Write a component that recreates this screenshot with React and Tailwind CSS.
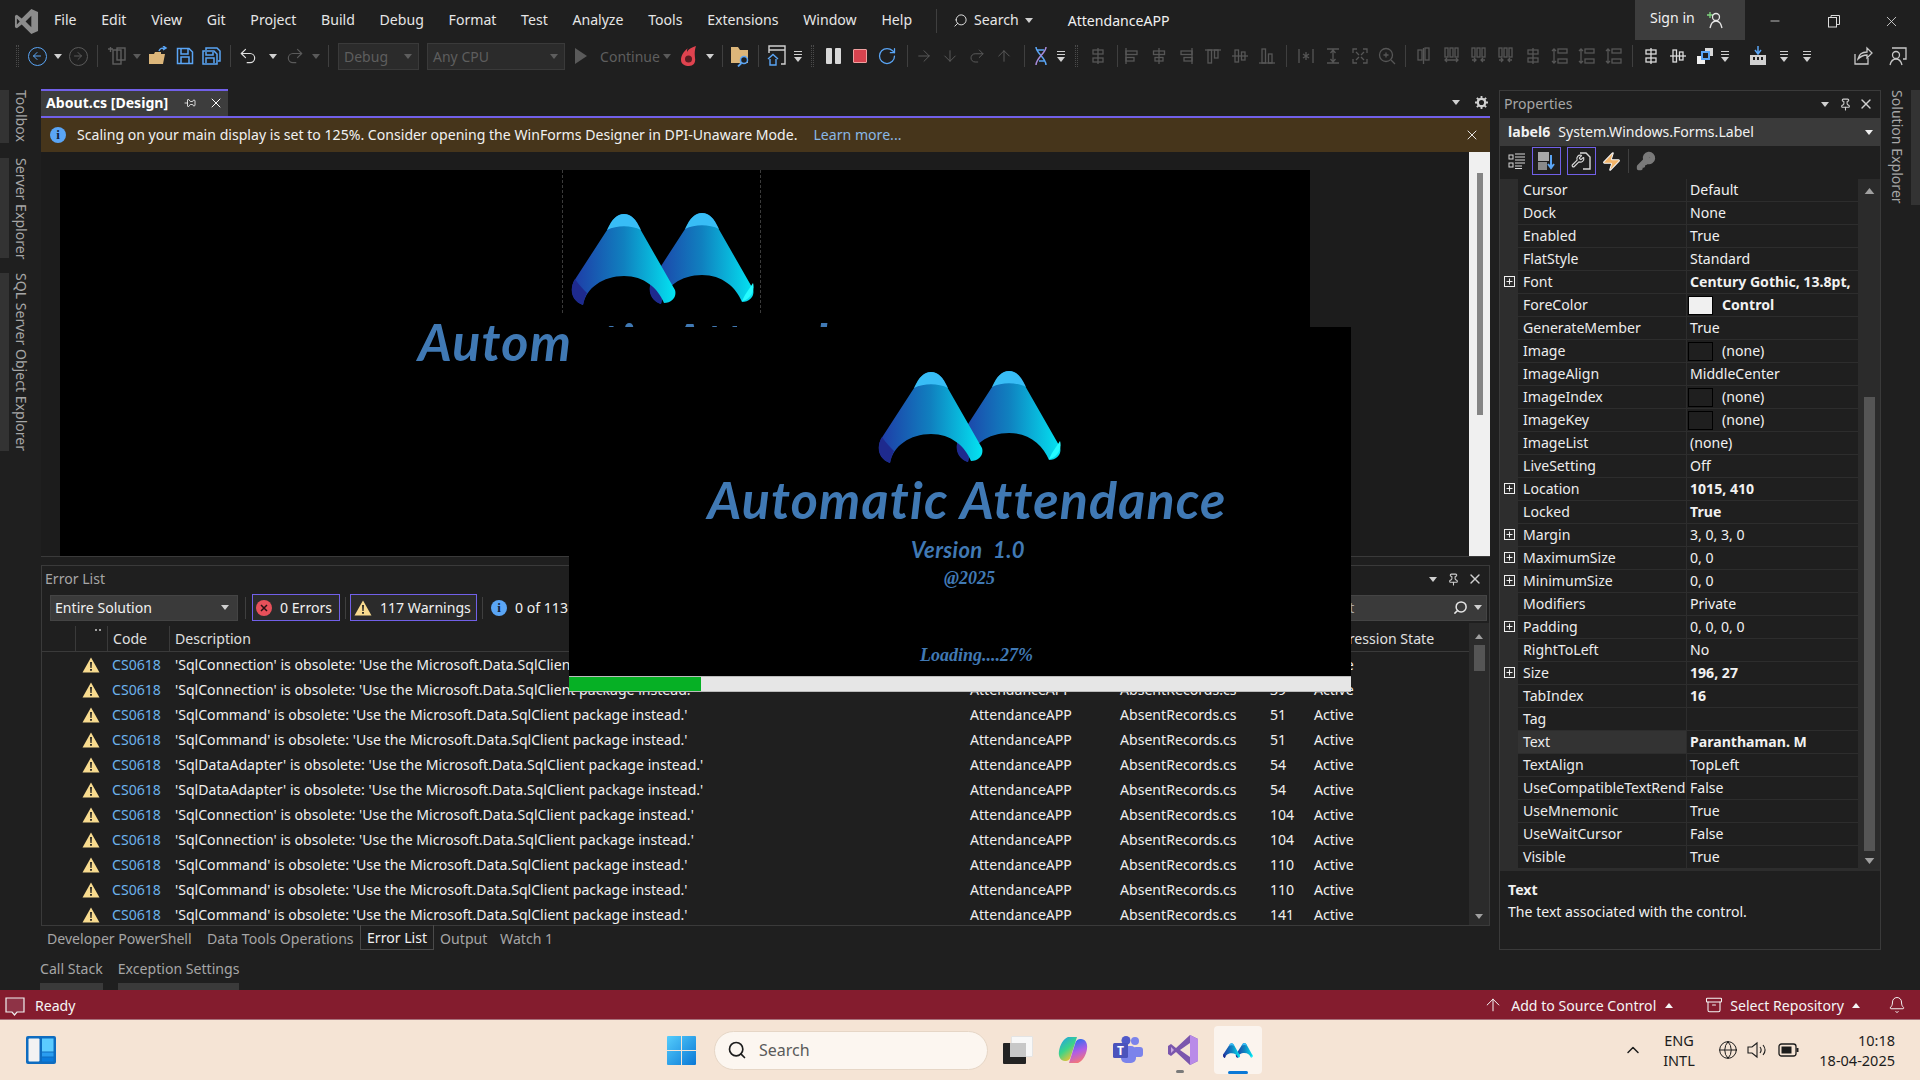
import {
  Pin, X, Minus, Search, Bell, ChevronUp, Globe, Archive, ArrowUp, ArrowRight, ArrowDown,
  Undo2, Redo2, RotateCw, Wrench, KeyRound, Zap,
} from "lucide-react";

const MENU = ["File", "Edit", "View", "Git", "Project", "Build", "Debug", "Format", "Test", "Analyze", "Tools", "Extensions", "Window", "Help"];

const OBSOLETE = (n) => `'${n}' is obsolete: 'Use the Microsoft.Data.SqlClient package instead.'`;
const ERRORS = [
  ["SqlConnection", 39], ["SqlConnection", 39], ["SqlCommand", 51], ["SqlCommand", 51],
  ["SqlDataAdapter", 54], ["SqlDataAdapter", 54], ["SqlConnection", 104], ["SqlConnection", 104],
  ["SqlCommand", 110], ["SqlCommand", 110], ["SqlCommand", 141],
];

const PROPS = [
  { n: "Cursor", v: "Default" },
  { n: "Dock", v: "None" },
  { n: "Enabled", v: "True" },
  { n: "FlatStyle", v: "Standard" },
  { n: "Font", v: "Century Gothic, 13.8pt,", b: true, plus: true },
  { n: "ForeColor", v: "Control", b: true, swatch: "light" },
  { n: "GenerateMember", v: "True" },
  { n: "Image", v: "(none)", swatch: "dark" },
  { n: "ImageAlign", v: "MiddleCenter" },
  { n: "ImageIndex", v: "(none)", swatch: "dark" },
  { n: "ImageKey", v: "(none)", swatch: "dark" },
  { n: "ImageList", v: "(none)" },
  { n: "LiveSetting", v: "Off" },
  { n: "Location", v: "1015, 410", b: true, plus: true },
  { n: "Locked", v: "True", b: true },
  { n: "Margin", v: "3, 0, 3, 0", plus: true },
  { n: "MaximumSize", v: "0, 0", plus: true },
  { n: "MinimumSize", v: "0, 0", plus: true },
  { n: "Modifiers", v: "Private" },
  { n: "Padding", v: "0, 0, 0, 0", plus: true },
  { n: "RightToLeft", v: "No" },
  { n: "Size", v: "196, 27", b: true, plus: true },
  { n: "TabIndex", v: "16", b: true },
  { n: "Tag", v: "" },
  { n: "Text", v: "Paranthaman. M", b: true, sel: true },
  { n: "TextAlign", v: "TopLeft" },
  { n: "UseCompatibleTextRend", v: "False" },
  { n: "UseMnemonic", v: "True" },
  { n: "UseWaitCursor", v: "False" },
  { n: "Visible", v: "True" },
];

function Logo({ className }) {
  return (
    <svg viewBox="0 0 184 92" className={className}>
      <defs>
        <linearGradient id="lg-a" x1="0" x2="1" y1="0" y2="0">
          <stop offset="0" stopColor="#1f3aa6" />
          <stop offset="0.5" stopColor="#1080bf" />
          <stop offset="1" stopColor="#03e4f2" />
        </linearGradient>
      </defs>
      {[78, 0].map((dx) => (
        <g key={dx} transform={`translate(${dx} ${dx ? -1 : 0})`}>
          <path d="M53 1C46 1 42 6 38 14L3 68C-1 76 0 87 12 92C15 75 32 63 53 63C73 63 87 75 93 90C101 90 106 84 104 77L68 14C64 6 60 1 53 1Z" fill="url(#lg-a)" />
          <path d="M36 17C41 6 46 1 53 1C60 1 65 6 70 17C60 12 46 12 36 17Z" fill="#38bdf6" />
          <path d="M4 66C-2 76 0 88 12 92C13 88 14 84 16 80C12 76 8 72 4 66Z" fill="#1e2a8e" />
        </g>
      ))}
      <path d="M171 88C176 88 185 80 182 70L174 82Z" fill="#25fbff" />
    </svg>
  );
}

function Caret({ className = "text-[#d0d0d0]", up }) {
  return (
    <svg viewBox="0 0 8 5" className={`w-[8px] h-[5px] ${className}`}>
      <path d={up ? "M0 5L4 0L8 5Z" : "M0 0H8L4 5Z"} fill="currentColor" />
    </svg>
  );
}

function Grip() {
  return <div className="w-[3px] h-[22px] border-x border-dotted border-[#4a4a4a]" />;
}

function Sep() {
  return <div className="w-px h-[22px] bg-[#3f3f3f]" />;
}

function Warn({ className = "w-[18px] h-[16px]" }) {
  return (
    <svg viewBox="0 0 18 16" className={className}>
      <path d="M9 0.5L17.5 15.5H0.5Z" fill="#f8db8f" />
      <path d="M8.1 5H9.9L9.6 11H8.4Z M8.1 12H9.9V13.8H8.1Z" fill="#1a1a1a" />
    </svg>
  );
}

function InfoDot({ className }) {
  return (
    <div className={`rounded-full bg-[#5aa5f5] text-[#10223a] flex items-center justify-center font-bold font-['Liberation_Serif',serif] ${className}`}>i</div>
  );
}

// generic designer layout glyph, the toolbar has a lot of these
function Layout({ v = 0, on }) {
  const c = on ? "#dcdcdc" : "#565656";
  const shapes = [
    <><path d="M3 1V17" /><rect x="3" y="4" width="11" height="3.5" /><rect x="3" y="10.5" width="8" height="3.5" /></>,
    <><path d="M9 1V17" /><rect x="3.5" y="4" width="11" height="3.5" /><rect x="5" y="10.5" width="8" height="3.5" /></>,
    <><path d="M15 1V17" /><rect x="4" y="4" width="11" height="3.5" /><rect x="7" y="10.5" width="8" height="3.5" /></>,
    <><path d="M1 3H17" /><rect x="4" y="3" width="3.5" height="13" /><rect x="10.5" y="3" width="3.5" height="8" /></>,
    <><path d="M1 9H17" /><rect x="4" y="3" width="3.5" height="12" /><rect x="10.5" y="5" width="3.5" height="8" /></>,
    <><path d="M1 16H17" /><rect x="4" y="2" width="3.5" height="14" /><rect x="10.5" y="7" width="3.5" height="9" /></>,
    <><path d="M2 2V16M16 2V16" /><path d="M9 5V13M6 7L12 11M12 7L6 11" /></>,
    <><path d="M3 2H15M3 16H15M9 3V15M6.5 6L9 3L11.5 6M6.5 12L9 15L11.5 12" /></>,
    <><path d="M2 6V2H6M12 2H16V6M16 12V16H12M6 16H2V12" /><path d="M5 5L8 8M13 5L10 8M5 13L8 10M13 13L10 10" /></>,
    <><circle cx="8" cy="8" r="6.5" /><path d="M13 13L17 17M5.5 8H10.5M8 5.5V10.5" /></>,
    <><rect x="2" y="3" width="4" height="10" /><rect x="9" y="1" width="4" height="12" /><path d="M7.5 1V17" /></>,
    <><rect x="2" y="1" width="3" height="9" /><rect x="7" y="1" width="3" height="9" /><rect x="12" y="1" width="3" height="9" /><path d="M2 13H15M4 15L2 13L4 11M13 15L15 13L13 11" /></>,
    <><rect x="2" y="1" width="3" height="9" /><rect x="7" y="1" width="3" height="9" /><rect x="12" y="1" width="3" height="9" /><path d="M6 13H2M11 13H15M4 11L6 13L4 15M13 11L11 13L13 15" /></>,
    <><rect x="4" y="3" width="10" height="4" /><rect x="4" y="11" width="10" height="4" /><path d="M9 1V17" /></>,
    <><rect x="7" y="2" width="9" height="4" /><rect x="7" y="12" width="9" height="4" /><path d="M3 2V16M1 4L3 2L5 4M1 14L3 16L5 14" /></>,
  ];
  return (
    <svg viewBox="0 0 18 18" fill="none" stroke={c} strokeWidth="1.3" className="w-[18px] h-[18px]">
      {shapes[v]}
    </svg>
  );
}

function Cell({ c, children }) {
  return <div className={`flex items-center justify-center shrink-0 h-full ${c}`}>{children}</div>;
}

function Combo({ label, c }) {
  return (
    <div className={`h-[27px] shrink-0 bg-[#2b2b2b] border border-[#3a3a3a] flex items-center justify-between pl-[5px] pr-[6px] text-[#5e5e5e] ${c}`}>
      {label}
      <Caret className="text-[#5e5e5e]" />
    </div>
  );
}

function TitleBar() {
  return (
    <div className="h-[42px] flex shrink-0 relative">
      <div className="w-[54px] flex items-center justify-center">
        <svg viewBox="0 0 26 28" className="w-[25px] h-[27px] ml-[-1px]">
          <path d="M18 1L25 4V24L18 27L8 17L3 21L1 20V8L3 7L8 11ZM18 8L12 14L18 20Z M3 11V17L6 14Z" fill="#8c8c8c" fillRule="evenodd" />
        </svg>
      </div>
      <div className="flex items-center gap-[24.7px] pb-[2px] text-[#e6e6e6]">
        {MENU.map((m) => <span key={m}>{m}</span>)}
      </div>
      <div className="w-px h-[24px] bg-[#3f3f3f] self-center ml-[24px]" />
      <div className="flex items-center ml-[16px] gap-[6px] pb-[2px] text-[#e6e6e6]">
        <Search size={15} strokeWidth={1.5} className="-scale-x-100" />
        <span>Search</span>
        <Caret />
      </div>
      <span className="self-center ml-[35px] pb-[1px] text-[#f1f1f1]">AttendanceAPP</span>
      <div className="ml-auto flex">
        <div className="h-[40px] w-[110px] bg-[#3d3d3d] flex items-center pl-[15px] gap-[10px] text-[#f1f1f1]">
          <span className="-mt-[5px]">Sign in</span>
          <svg viewBox="0 0 20 20" fill="none" strokeWidth="1.3" className="w-[20px] h-[20px] -mt-[2px]">
            <path d="M2 6H8M5 3V9" stroke="#7fd67f" />
            <circle cx="11" cy="8" r="3.5" stroke="#e6e6e6" />
            <path d="M5 19C6 14 8 12 11 12C14 12 16 14 17 19" stroke="#e6e6e6" />
          </svg>
        </div>
        <div className="w-[175px] flex items-center text-[#dcdcdc]">
          <Cell c="w-[60px]"><Minus size={14} strokeWidth={1.4} /></Cell>
          <Cell c="w-[57px]">
            <svg viewBox="0 0 14 14" fill="none" stroke="currentColor" className="w-[14px] h-[14px]"><rect x="1.5" y="3.5" width="8" height="9.5" /><path d="M4 3.5V1.5H12.5V10.5H9.5" /></svg>
          </Cell>
          <Cell c="w-[58px]"><X size={17} strokeWidth={1.2} /></Cell>
        </div>
      </div>
    </div>
  );
}

function ToolBar() {
  const dim = "text-[#5a5a5a]";
  const caret = <Caret />;
  const dimCaret = <Caret className="text-[#5a5a5a]" />;
  const stackDrop = (
    <div className="flex flex-col items-center gap-[2px]">
      <div className="w-[8px] h-px bg-[#cfcfcf]" />
      <div className="w-[8px] h-px bg-[#cfcfcf]" />
      <Caret />
    </div>
  );
  return (
    <div className="h-[28px] mb-[18px] flex shrink-0 pl-[12px] text-[14px]">
      <Cell c="w-[10px]"><Grip /></Cell>
      <Cell c="w-[30px]">
        <div className="w-[19px] h-[19px] rounded-full border-[1.5px] border-[#5aa5f5] flex items-center justify-center text-[#5aa5f5]"><ArrowRight size={12} className="rotate-180" /></div>
      </Cell>
      <Cell c="w-[12px]">{caret}</Cell>
      <Cell c="w-[28px]">
        <div className={`w-[19px] h-[19px] rounded-full border border-[#5a5a5a] flex items-center justify-center ${dim}`}><ArrowRight size={12} /></div>
      </Cell>
      <Cell c="w-[10px]"><Sep /></Cell>
      <Cell c="w-[30px]">
        <svg viewBox="0 0 20 20" fill="none" stroke="#5e5e5e" strokeWidth="1.4" className="w-[20px] h-[20px]"><rect x="6" y="4" width="8" height="14" /><rect x="10" y="2" width="8" height="12" /><path d="M1 3H6M3.5 1V6" /></svg>
      </Cell>
      <Cell c="w-[10px]">{dimCaret}</Cell>
      <Cell c="w-[32px]">
        <svg viewBox="0 0 20 20" className="w-[20px] h-[20px]"><path d="M1 8H6L7 6H13V8H17L15 18H1Z" fill="#dcb67a" /><path d="M11 5C12 2 14 2 17 2M15 0L18 2L15 4" fill="none" stroke="#5aa5f5" strokeWidth="1.5" /></svg>
      </Cell>
      <Cell c="w-[22px]">
        <svg viewBox="0 0 18 18" fill="none" stroke="#5aa5f5" strokeWidth="1.5" className="w-[18px] h-[18px]"><path d="M1.5 1.5H13L16.5 5V16.5H1.5Z" /><path d="M5 2V7H12V2M5 16V10H13V16" /></svg>
      </Cell>
      <Cell c="w-[30px]">
        <svg viewBox="0 0 19 18" fill="none" stroke="#5aa5f5" strokeWidth="1.5" className="w-[19px] h-[18px]"><path d="M4 3V1H15L18 4V14H16" /><path d="M1 4H12L15 7V17H1Z" /><path d="M4 5V8H11V5M4 16V11H12V16" /></svg>
      </Cell>
      <Cell c="w-[8px]"><Sep /></Cell>
      <Cell c="w-[28px]"><Undo2 size={20} strokeWidth={1.4} className="text-[#e0e0e0]" /></Cell>
      <Cell c="w-[22px]">{caret}</Cell>
      <Cell c="w-[22px]"><Redo2 size={20} strokeWidth={1.4} className={dim} /></Cell>
      <Cell c="w-[20px]">{dimCaret}</Cell>
      <Cell c="w-[4px]"><Sep /></Cell>
      <div className="w-[8px] shrink-0" />
      <Cell c="w-[81px]"><Combo label="Debug" c="w-full" /></Cell>
      <div className="w-[8px] shrink-0" />
      <Cell c="w-[138px]"><Combo label="Any CPU" c="w-full" /></Cell>
      <Cell c="w-[32px]"><svg viewBox="0 0 12 16" className="w-[12px] h-[16px]"><path d="M0 0L12 8L0 16Z" fill="#5a5a5a" /></svg></Cell>
      <Cell c="w-[66px]"><span className="text-[#5e5e5e]">Continue</span></Cell>
      <Cell c="w-[8px]">{dimCaret}</Cell>
      <Cell c="w-[35px]">
        <svg viewBox="0 0 18 22" className="w-[18px] h-[22px]"><path d="M16 1C10 3 8 5 7 7C7 5 7 4 8 3C3 7 1 11 1 15C1 19 5 21 9 21C13 21 16 18 15 13C15 10 14 7 16 1Z" fill="#e0434f" /><circle cx="8.5" cy="14" r="3.5" fill="#5a1d22" /></svg>
      </Cell>
      <Cell c="w-[8px]">{caret}</Cell>
      <Cell c="w-[16px]"><Sep /></Cell>
      <Cell c="w-[20px]">
        <svg viewBox="0 0 20 22" className="w-[20px] h-[22px]"><path d="M1 2H8L10 5H18V18H1Z" fill="#dcb67a" /><circle cx="14" cy="15" r="3.5" fill="#1f1f1f" stroke="#5aa5f5" strokeWidth="1.5" /><path d="M11.5 18L8 21.5" stroke="#5aa5f5" strokeWidth="1.8" /></svg>
      </Cell>
      <Cell c="w-[16px]"><Sep /></Cell>
      <Cell c="w-[22px]">
        <svg viewBox="0 0 20 22" fill="none" strokeWidth="1.4" className="w-[20px] h-[22px]"><path d="M2 8V1H18V19H14M2 5H18" stroke="#d0d0d0" /><path d="M1 14L6 9.5L11 14M3 14V20H9V14" stroke="#5aa5f5" /></svg>
      </Cell>
      <Cell c="w-[20px]">{stackDrop}</Cell>
      <Cell c="w-[8px]"><Grip /></Cell>
      <Cell c="w-[34px]"><div className="flex gap-[3px]"><div className="w-[6px] h-[16px] bg-[#d8d8d8] rounded-[1px]" /><div className="w-[6px] h-[16px] bg-[#d8d8d8] rounded-[1px]" /></div></Cell>
      <Cell c="w-[20px]"><div className="w-[14px] h-[14px] bg-[#d8434f] border border-[#f0a0a0] rounded-[1px]" /></Cell>
      <Cell c="w-[34px]"><RotateCw size={20} strokeWidth={1.5} className="text-[#5aa5f5]" /></Cell>
      <Cell c="w-[6px]"><Sep /></Cell>
      <Cell c="w-[28px]"><ArrowRight size={18} strokeWidth={1.3} className={dim} /></Cell>
      <Cell c="w-[24px]"><ArrowDown size={18} strokeWidth={1.3} className={dim} /></Cell>
      <Cell c="w-[30px]"><Redo2 size={18} strokeWidth={1.3} className={dim} /></Cell>
      <Cell c="w-[24px]"><ArrowUp size={18} strokeWidth={1.3} className={dim} /></Cell>
      <Cell c="w-[16px]"><Sep /></Cell>
      <Cell c="w-[18px]">
        <svg viewBox="0 0 18 20" fill="none" strokeWidth="1.5" className="w-[18px] h-[20px]"><path d="M4 1C4 7 14 12 14 19M5 4H12M7 15H13" stroke="#5aa5f5" /><path d="M14 1C14 7 4 12 4 19" stroke="#a78bda" /></svg>
      </Cell>
      <Cell c="w-[22px]">{stackDrop}</Cell>
      <Cell c="w-[8px]"><Grip /></Cell>
      <Cell c="w-[36px]"><Layout v={13} /></Cell>
      <Cell c="w-[2px]"><Sep /></Cell>
      {[0, 1, 2, 3, 4, 5].map((v) => <Cell key={v} c="w-[27px]"><Layout v={v} /></Cell>)}
      <Cell c="w-[12px]"><Sep /></Cell>
      {[6, 7, 8, 9].map((v) => <Cell key={v} c="w-[27px]"><Layout v={v} /></Cell>)}
      <Cell c="w-[10px]"><Sep /></Cell>
      <div className="w-px shrink-0" />
      {[10, 11, 12, 12, 13, 14, 14, 14].map((v, i) => <Cell key={i} c="w-[27px]"><Layout v={v} /></Cell>)}
      <Cell c="w-[10px]"><Sep /></Cell>
      <Cell c="w-[27px]"><Layout v={13} on /></Cell>
      <Cell c="w-[27px]"><Layout v={4} on /></Cell>
      <Cell c="w-[27px]">
        <svg viewBox="0 0 18 18" className="w-[18px] h-[18px]"><rect x="1" y="9" width="8" height="8" fill="#f0f0f0" /><rect x="9" y="1" width="8" height="8" fill="#d8d8d8" /><rect x="6" y="5" width="7" height="7" fill="#1f1f1f" stroke="#5aa5f5" strokeWidth="2" /></svg>
      </Cell>
      <Cell c="w-[14px]">{stackDrop}</Cell>
      <div className="w-[12px] shrink-0" />
      <Cell c="w-[28px]">
        <svg viewBox="0 0 18 20" className="w-[18px] h-[20px]"><path d="M9 0V7M6 4L9 8L12 4" fill="none" stroke="#5aa5f5" strokeWidth="1.5" /><path d="M1 9H17V19H1Z M4 11V14H6V11Z M8 11V14H10V11Z M12 11V14H14V11Z" fill="#d0d0d0" fillRule="evenodd" /></svg>
      </Cell>
      <Cell c="w-[24px]">{stackDrop}</Cell>
      <Cell c="w-[22px]">{stackDrop}</Cell>
      <div className="w-[30px] shrink-0" />
      <Cell c="w-[30px]">
        <svg viewBox="0 0 20 20" fill="none" stroke="#c8c8c8" strokeWidth="1.3" className="w-[20px] h-[20px]"><path d="M2 8V18H15V12" /><path d="M5 13C6 8 10 6 14 6V2L19 7L14 12V9C11 9 8 10 5 13Z" /></svg>
      </Cell>
      <Cell c="w-[38px]">
        <svg viewBox="0 0 20 20" fill="none" stroke="#c8c8c8" strokeWidth="1.3" className="w-[20px] h-[20px]"><path d="M5 2H19V13H16" /><circle cx="9" cy="9" r="3.5" /><path d="M3 19C4 15 6 13 9 13C12 13 14 15 15 19" /></svg>
      </Cell>
    </div>
  );
}

function RailLabel({ children, c }) {
  return (
    <div className={`flex shrink-0 ${c}`}>
      <div className="w-[9px] bg-[#333333] h-full" />
      <span className="ml-[5px] [writing-mode:vertical-rl] whitespace-nowrap text-[#a6a6a6] leading-[14px]">{children}</span>
    </div>
  );
}

function Designer() {
  return (
    <div className="h-[404px] shrink-0 relative bg-[#1c1c1c] flex justify-end">
      {/* the form is a free canvas, controls sit where the designer put them */}
      <div className="absolute left-[19px] top-[18px] w-[1250px] bottom-0 bg-black overflow-hidden">
        <div className="absolute left-[502px] top-0 w-[199px] h-[143px] border-x border-dashed border-[#3a3a3a]" />
        <Logo className="absolute left-[511px] top-[43px] w-[184px] h-[92px]" />
        <div className="absolute left-[358px] top-[146px] whitespace-nowrap font-['Lato',sans-serif] font-bold italic text-[52px] tracking-[1.2px] leading-[50px] text-[#4079b4]">Automatic Attendance</div>
      </div>
      <div className="w-[21px] bg-[#f0f0f0] pt-[21px] pl-[8px]">
        <div className="w-[6px] h-[242px] bg-[#858585]" />
      </div>
    </div>
  );
}

function PanelBtn({ icon, label, c }) {
  return (
    <div className={`h-[27px] shrink-0 border border-[#7160e8] bg-[#2b2b2b] flex items-center ${c}`}>
      {icon}
      {label}
    </div>
  );
}

const GRID = "grid grid-cols-[33px_32px_62px_796px_150px_150px_44px_151px]";

function ErrorList() {
  return (
    <div className="h-[361px] shrink-0 border border-[#3a3a3a] bg-[#1f1f1f] flex flex-col overflow-hidden">
      <div className="h-[26px] shrink-0 flex items-center pl-[3px] text-[#a6a6a6]">
        <span>Error List</span>
        <div className="ml-auto flex items-center text-[#cfcfcf]">
          <Caret />
          <Pin size={13} className="ml-[10px]" />
          <X size={16} className="ml-[7px] mr-[6px]" />
        </div>
      </div>
      <div className="h-[31px] shrink-0 flex items-center pl-[8px] text-[#f1f1f1]">
        <div className="w-[188px] h-[26px] bg-[#3a3a3a] border border-[#444444] flex items-center justify-between pl-[4px] pr-[8px]">
          Entire Solution
          <Caret />
        </div>
        <div className="w-px h-[22px] bg-[#3f3f3f] mx-[7px]" />
        <PanelBtn c="w-[88px] gap-[8px] pl-[3px] ml-[-1px]" label="0 Errors" icon={
          <svg viewBox="0 0 16 16" className="w-[16px] h-[16px]"><circle cx="8" cy="8" r="8" fill="#e8505a" /><path d="M5 5L11 11M11 5L5 11" stroke="#2a1113" strokeWidth="1.5" /></svg>
        } />
        <div className="w-px h-[22px] bg-[#3f3f3f] mx-[4.5px]" />
        <PanelBtn c="w-[127px] gap-[8px] pl-[3px]" label="117 Warnings" icon={<Warn />} />
        <div className="w-px h-[22px] bg-[#3f3f3f] ml-[5px]" />
        <InfoDot className="w-[16px] h-[16px] text-[13px] ml-[8px]" />
        <span className="ml-[8px]">0 of 113 Messages</span>
        <div className="ml-auto w-[280px] h-[26px] bg-[#3a3a3a] border border-[#444444] flex items-center pl-[38px] pr-[4px] mr-[2px] text-[#a6a6a6]">
          Search Error List
          <Search size={15} strokeWidth={2.4} className="ml-auto text-[#e6e6e6] -scale-x-100" />
          <Caret className="ml-[6px] text-[#d0d0d0]" />
        </div>
      </div>
      <div className="flex flex-1 min-h-0">
        <div className="flex-1 min-w-0">
          <div className={`${GRID} h-[29px] pt-[3px] border-b border-[#3a3a3a] items-stretch text-[#e0e0e0]`}>
            <div />
            <div className="border-l border-[#3a3a3a] relative"><div className="absolute right-[6px] top-[3px] w-[6px] h-[5px] border-t-2 border-dotted border-[#a0a0a0]" /></div>
            {["Code", "Description", "Project", "File", "Line", "Suppression State"].map((h) => (
              <div key={h} className="border-l border-[#3a3a3a] pl-[5px] flex items-center">{h}</div>
            ))}
          </div>
          {ERRORS.map(([n, line], i) => (
            <div key={i} className={`${GRID} h-[25px] items-center text-[#f0f0f0]`}>
              <div />
              <div className="flex justify-center"><Warn /></div>
              <div className="pl-[5px] text-[#6cb2ec]">CS0618</div>
              <div className="pl-[6px] whitespace-nowrap overflow-hidden">{OBSOLETE(n)}</div>
              <div className="pl-[5px]">AttendanceAPP</div>
              <div className="pl-[5px]">AbsentRecords.cs</div>
              <div className="pl-[5px]">{line}</div>
              <div className="pl-[5px]">Active</div>
            </div>
          ))}
        </div>
        <div className="w-[20px] shrink-0 bg-[#2b2b2b] flex flex-col items-center pt-[11px] pb-[6px]">
          <Caret up className="text-[#a0a0a0]" />
          <div className="w-[11px] h-[26px] bg-[#555555] mt-[6px]" />
          <Caret className="text-[#a0a0a0] mt-auto" />
        </div>
      </div>
    </div>
  );
}

function ToolTabs() {
  return (
    <>
      <div className="h-[30px] shrink-0 flex pl-[6px] text-[#a6a6a6] gap-[1px] items-start">
        <span className="h-[25px] flex items-center w-[159px]">Developer PowerShell</span>
        <span className="h-[25px] flex items-center w-[152px]">Data Tools Operations</span>
        <span className="h-[25px] px-[6px] pt-[1px] flex items-center border border-t-0 border-[#4a4a4a] text-[#f1f1f1] -mt-px">Error List</span>
        <span className="h-[25px] flex items-center ml-[5px] w-[59px]">Output</span>
        <span className="h-[25px] flex items-center">Watch 1</span>
      </div>
      <div className="h-[35px] shrink-0 flex -ml-px gap-[15px] text-[#a6a6a6]">
        <div className="flex flex-col justify-between">
          <span className="leading-[25px]">Call Stack</span>
          <div className="h-[8px] bg-[#3a3a3a]" />
        </div>
        <div className="flex flex-col justify-between">
          <span className="leading-[25px]">Exception Settings</span>
          <div className="h-[8px] bg-[#3a3a3a]" />
        </div>
      </div>
    </>
  );
}

function Properties() {
  const tools = "w-[28px] h-[27px] flex items-center justify-center";
  const on = "w-[29px] h-[28px] flex items-center justify-center border border-[#7160e8]";
  return (
    <div className="w-[382px] h-[860px] mt-[2px] ml-[9px] shrink-0 border border-[#3a3a3a] flex flex-col">
      <div className="h-[27px] shrink-0 flex items-center pl-[4px] pb-[1px] text-[#a6a6a6]">
        Properties
        <div className="ml-auto flex items-center text-[#cfcfcf]">
          <Caret />
          <Pin size={13} className="ml-[10px]" />
          <X size={16} className="ml-[6px] mr-[6px]" />
        </div>
      </div>
      <div className="h-[28px] shrink-0 bg-[#3a3a3a] flex items-center pl-[8px] pr-[7px] gap-[8px] text-[#f1f1f1]">
        <b className="font-bold">label6</b>
        <span>System.Windows.Forms.Label</span>
        <Caret className="ml-auto" />
      </div>
      <div className="h-[30px] shrink-0 flex items-center pl-[3px] gap-[1px]">
        <div className={tools}>
          <svg viewBox="0 0 18 18" fill="none" stroke="#d8d8d8" className="w-[18px] h-[18px]"><rect x="1" y="3" width="4" height="4" /><rect x="1" y="11" width="4" height="4" /><path d="M7 2H17M7 5H17M7 8H17M7 11H17M7 14H14M7 16.5H14" /></svg>
        </div>
        <div className={on}>
          <svg viewBox="0 0 20 20" className="w-[20px] h-[20px]"><rect x="1" y="1" width="11" height="9" fill="#a8a8a8" /><rect x="1" y="11" width="9" height="8" fill="#8a8a8a" /><path d="M14 4V16M11 13L14 17L17 13" fill="none" stroke="#5aa5f5" strokeWidth="2" /></svg>
        </div>
        <div className="w-[4px]" />
        <div className={on}>
          <svg viewBox="0 0 20 20" fill="none" stroke="#d8d8d8" strokeWidth="1.4" className="w-[20px] h-[20px]"><path d="M8 2H14L18 6V18H11" /></svg>
          <Wrench size={14} className="absolute mr-[8px] text-[#d8d8d8]" />
        </div>
        <div className={tools}><Zap size={21} fill="#f3b56a" stroke="#f5f5f5" strokeWidth={1.2} /></div>
        <div className="w-px h-[24px] bg-[#3f3f3f] mx-[2px]" />
        <div className={tools}><KeyRound size={20} fill="#7a7a7a" stroke="#7a7a7a" /></div>
      </div>
      <div className="flex mt-[3px]">
        <div className="flex-1 min-w-0 bg-[#2d2d2d]">
          {PROPS.map((p) => (
            <div key={p.n} className="h-[23px] flex">
              <div className="w-[18px] shrink-0 flex items-center justify-center">
                {p.plus && (
                  <svg viewBox="0 0 11 11" fill="none" stroke="#f0f0f0" className="w-[11px] h-[11px] mt-[-2px]"><rect x="0.5" y="0.5" width="10" height="10" /><path d="M2.5 5.5H8.5M5.5 2.5V8.5" /></svg>
                )}
              </div>
              <div className={`w-[168px] shrink-0 border-b border-[#2d2d2d] pl-[5px] flex items-center whitespace-nowrap overflow-hidden text-[#ededed] ${p.sel ? "bg-[#333333]" : "bg-[#1f1f1f]"}`}>{p.n}</div>
              <div className={`flex-1 ml-px border-b border-[#2d2d2d] bg-[#1f1f1f] pl-[3px] flex items-center whitespace-nowrap text-[#f1f1f1] ${p.b ? "font-bold" : ""}`}>
                {p.swatch && (
                  <div className={`w-[25px] h-[19px] border border-black mr-[9px] ml-[-2px] ${p.swatch === "light" ? "bg-[#f0f0f0]" : "bg-[#1f1f1f]"}`} />
                )}
                {p.v}
              </div>
            </div>
          ))}
        </div>
        <div className="w-[22px] shrink-0 bg-[#2b2b2b] flex flex-col items-center pt-[9px] justify-between pb-[5px]">
          <Caret up className="text-[#a0a0a0] w-[11px] h-[6px]" />
          <div className="w-[11px] h-[454px] bg-[#555555] mt-auto" />
          <Caret className="text-[#a0a0a0] w-[11px] h-[6px] mt-[7px]" />
        </div>
      </div>
      <div className="flex-1 border-t-2 border-[#2d2d2d] pl-[8px] pt-[8px] leading-[22px] text-[#f1f1f1]">
        <div className="font-bold">Text</div>
        <div>The text associated with the control.</div>
      </div>
    </div>
  );
}

function StatusBar() {
  return (
    <div className="h-[30px] shrink-0 bg-[#841c2e] flex items-center pt-[2px] text-[#f5f5f5] border-b border-[#a8727c]">
      <svg viewBox="0 0 20 20" fill="none" stroke="#f0f0f0" strokeWidth="1.2" className="w-[20px] h-[20px] ml-[5px]"><path d="M1 2H19V16H12L9.5 19L7 16H1Z" fill="#8e3346" /></svg>
      <span className="ml-[10px]">Ready</span>
      <div className="ml-auto flex items-center">
        <ArrowUp size={20} strokeWidth={1.2} />
        <span className="ml-[8px]">Add to Source Control</span>
        <Caret up className="text-[#f5f5f5] ml-[9px]" />
        <Archive size={18} strokeWidth={1.4} className="ml-[32px]" />
        <span className="ml-[7px]">Select Repository</span>
        <Caret up className="text-[#f5f5f5] ml-[8px]" />
        <Bell size={18} strokeWidth={1.3} className="ml-[28px] mr-[14px]" />
      </div>
    </div>
  );
}

function Taskbar() {
  return (
    <div className="h-[60px] shrink-0 bg-[#f5e4d5] flex items-center text-[#1c1c1c]">
      <svg viewBox="0 0 30 28" className="w-[30px] h-[28px] ml-[26px]">
        <rect width="30" height="28" rx="2" fill="#0e6cc0" />
        <rect x="2.5" y="2.5" width="11" height="23" rx="1" fill="#f2f2f2" />
        <rect x="16" y="2.5" width="11.5" height="13" fill="#5ccbff" />
        <rect x="16" y="16.5" width="11.5" height="4" fill="#2a9df0" />
        <rect x="16" y="21.5" width="11.5" height="4" fill="#0a7bdc" />
      </svg>
      <svg viewBox="0 0 29 29" className="w-[29px] h-[29px] ml-[611px]">
        <defs>
          <linearGradient id="win" x1="0" y1="0" x2="1" y2="1">
            <stop offset="0" stopColor="#55cdfc" />
            <stop offset="1" stopColor="#0a78d6" />
          </linearGradient>
        </defs>
        <path d="M1 0H14V14H0V1Q0 0 1 0ZM15 0H28Q29 0 29 1V14H15ZM0 15H14V29H1Q0 29 0 28ZM15 15H29V28Q29 29 28 29H15Z" fill="url(#win)" />
      </svg>
      <div className="w-[274px] h-[39px] ml-[18px] rounded-full bg-[#fcf6f0] border border-[#e6d6c6] flex items-center pl-[12px] gap-[12px] text-[#5a5a5a] text-[16px]">
        <Search size={20} strokeWidth={2} className="text-[#1c1c1c]" />
        Search
      </div>
      <div className="w-[30px] h-[28px] ml-[15px] relative shrink-0">
        <div className="absolute right-0 top-0 w-[22px] h-[21px] bg-[#f8f8f8] border border-[#e4e4e4] rounded-[1px]" />
        <div className="absolute left-0 bottom-0 w-[23px] h-[21px] bg-[#232323] rounded-[1px]" />
        <div className="absolute left-[7px] top-[7px] w-[16px] h-[14px] bg-[#c8c8c8]" />
      </div>
      <svg viewBox="0 0 30 28" className="w-[30px] h-[28px] ml-[25px]">
        <defs>
          <linearGradient id="cop-a" x1="0" y1="0" x2="0.6" y2="1"><stop offset="0" stopColor="#1e9bf0" /><stop offset="0.55" stopColor="#3bd48a" /><stop offset="1" stopColor="#f5c22e" /></linearGradient>
          <linearGradient id="cop-b" x1="0.4" y1="0" x2="0.7" y2="1"><stop offset="0" stopColor="#2a6ff0" /><stop offset="0.5" stopColor="#b05ce6" /><stop offset="1" stopColor="#ff7a66" /></linearGradient>
        </defs>
        <path d="M10 1H19L13 20C12 24 10 25 7 25C3 25 0 21 1 15C2 9 5 3 10 1Z" fill="url(#cop-a)" />
        <path d="M20 27H11L17 8C18 4 20 3 23 3C27 3 30 7 29 13C28 19 25 25 20 27Z" fill="url(#cop-b)" />
      </svg>
      <svg viewBox="0 0 30 28" className="w-[30px] h-[28px] ml-[25px]">
        <circle cx="22" cy="5" r="4" fill="#7b83eb" />
        <circle cx="13" cy="4.5" r="4.5" fill="#5059c9" />
        <rect x="20" y="11" width="10" height="10" rx="3" fill="#7b83eb" />
        <rect x="8" y="10" width="15" height="17" rx="5" fill="#7b83eb" />
        <rect x="0" y="7" width="15" height="15" rx="1.5" fill="#4b53bc" />
        <text x="7.5" y="18.5" textAnchor="middle" fontSize="12" fontWeight="700" fill="#fff" fontFamily="Noto Sans">T</text>
      </svg>
      <div className="ml-[25px] relative w-[30px] h-[30px] shrink-0">
        <svg viewBox="0 0 30 30" className="w-[30px] h-[30px]">
          <path d="M22 0L30 4V26L22 30L8 17L3 21L0 19V11L3 9L8 13Z" fill="#7b56ad" />
          <path d="M22 0L30 4V26L22 30Z" fill="#b98ae8" />
          <path d="M22 8V22L12 15Z" fill="#f5e4d5" />
          <path d="M3 12V18L6 15Z" fill="#c9a9e0" />
        </svg>
        <div className="absolute left-[8px] top-[35px] w-[8px] h-[3px] rounded-full bg-[#7a7a7a]" />
      </div>
      <div className="ml-[16px] w-[48px] h-[48px] rounded-[4px] bg-[#fbf4ee] relative flex items-center justify-center shrink-0">
        <Logo className="w-[30px] h-[15px]" />
        <div className="absolute bottom-0 left-[14px] w-[20px] h-[3px] rounded-full bg-[#0a78d6]" />
      </div>
      <ChevronUp size={20} strokeWidth={1.8} className="ml-[361px]" />
      <div className="ml-[19px] w-[34px] text-center text-[14.5px] leading-[20px]">ENG<br />INTL</div>
      <Globe size={20} strokeWidth={1.2} className="ml-[22px]" />
      <svg viewBox="0 0 22 18" fill="none" stroke="#1c1c1c" strokeWidth="1.1" className="w-[22px] h-[18px] ml-[9px]">
        <path d="M1 6H5L10 2V16L5 12H1Z M13 6C14.5 8 14.5 10 13 12M16 4C18.5 7 18.5 11 16 14" />
      </svg>
      <svg viewBox="0 0 22 14" fill="none" className="w-[22px] h-[14px] ml-[9px]">
        <rect x="1" y="1" width="17" height="12" rx="2.5" stroke="#1c1c1c" strokeWidth="1.3" />
        <rect x="3.5" y="3.5" width="10" height="7" fill="#1c1c1c" />
        <path d="M19.5 5V9" stroke="#1c1c1c" strokeWidth="2" />
      </svg>
      <div className="ml-auto mr-[25px] text-right text-[14.5px] leading-[20px]">10:18<br />18-04-2025</div>
    </div>
  );
}

function Splash() {
  return (
    <div className="absolute left-[569px] top-[327px] w-[782px] h-[365px] bg-black flex flex-col items-center">
      <Logo className="w-[184px] h-[92px] mt-[44px] ml-[19px] shrink-0" />
      <div className="mt-[7px] ml-[14px] whitespace-nowrap font-['Lato',sans-serif] font-bold italic text-[52px] tracking-[1.2px] leading-[58px] text-[#4079b4]">Automatic Attendance</div>
      <div className="mt-[8px] ml-[16px] whitespace-nowrap font-['Lato',sans-serif] font-bold italic text-[22px] tracking-[0.4px] leading-[28px] text-[#4079b4]">Version&nbsp; 1.0</div>
      <div className="mt-[4px] ml-[19px] font-['Liberation_Serif',serif] font-bold italic text-[18px] leading-[20px] text-[#4079b4]">@2025</div>
      <div className="mt-[55px] ml-[33px] font-['Liberation_Serif',serif] font-bold italic text-[18px] leading-[24px] text-[#4079b4]">Loading....27%</div>
      <div className="mt-auto w-full h-[16px] bg-[#e6e6e6] border-y border-[#bcbcbc]">
        <div className="w-[132px] h-full bg-[#06b025]" />
      </div>
    </div>
  );
}

export default function App() {
  return (
    <div className="relative w-[1920px] h-[1080px] overflow-hidden flex flex-col bg-[#1f1f1f] text-[14.1px] font-['Noto_Sans',sans-serif]">
      <TitleBar />
      <ToolBar />
      <div className="flex h-[902px] shrink-0">
        <div className="w-[41px] shrink-0 flex flex-col pt-[2px] gap-[15px]">
          <RailLabel c="h-[53px]">Toolbox</RailLabel>
          <RailLabel c="h-[100px]">Server Explorer</RailLabel>
          <RailLabel c="h-[178px]">SQL Server Object Explorer</RailLabel>
        </div>
        <div className="w-[1449px] shrink-0 flex flex-col">
          <div className="h-[27px] shrink-0 mt-[1px] flex items-center">
            <div className="w-[187px] h-full bg-[#3d3d3d] border-t-2 border-[#7160e8] flex items-center pl-[5px] pb-[2px] font-bold text-[#ffffff]">
              About.cs [Design]
              <Pin size={12} strokeWidth={1.6} className="ml-[16px] rotate-90" />
              <X size={16} strokeWidth={1.5} className="ml-[12px]" />
            </div>
            <div className="ml-auto flex items-center text-[#d0d0d0] pr-[2px] gap-[15px]">
              <Caret />
              <svg viewBox="0 0 14 14" className="w-[13px] h-[13px]"><circle cx="7" cy="7" r="4" fill="none" stroke="currentColor" strokeWidth="2.5" /><path d="M7 0V3M7 11V14M0 7H3M11 7H14M2 2L4 4M10 10L12 12M12 2L10 4M4 10L2 12" stroke="currentColor" strokeWidth="2" /></svg>
            </div>
          </div>
          <div className="h-[2px] shrink-0 bg-[#7160e8]" />
          <div className="h-[34px] shrink-0 bg-[#46351b] flex items-center pl-[9px] pr-[10px] pb-[1px] text-[#f1f1f1]">
            <InfoDot className="w-[16px] h-[16px] text-[13px]" />
            <span className="ml-[11px]">Scaling on your main display is set to 125%. Consider opening the WinForms Designer in DPI-Unaware Mode.</span>
            <span className="ml-[16px] text-[#89b8e6]">Learn more...</span>
            <X size={16} strokeWidth={1.4} className="ml-auto" />
          </div>
          <Designer />
          <div className="h-[9px] shrink-0 border-t border-[#3a3a3a]" />
          <ErrorList />
          <ToolTabs />
        </div>
        <Properties />
        <div className="flex-1 flex justify-end">
          <div className="relative w-[38px] h-[115px] mt-[2px] flex justify-end">
            <span className="absolute left-[8px] top-0 [writing-mode:vertical-rl] text-[#a6a6a6] leading-[14px] whitespace-nowrap">Solution Explorer</span>
            <div className="w-[9px] h-full bg-[#333333]" />
          </div>
        </div>
      </div>
      <StatusBar />
      <Taskbar />
      <Splash />
    </div>
  );
}
